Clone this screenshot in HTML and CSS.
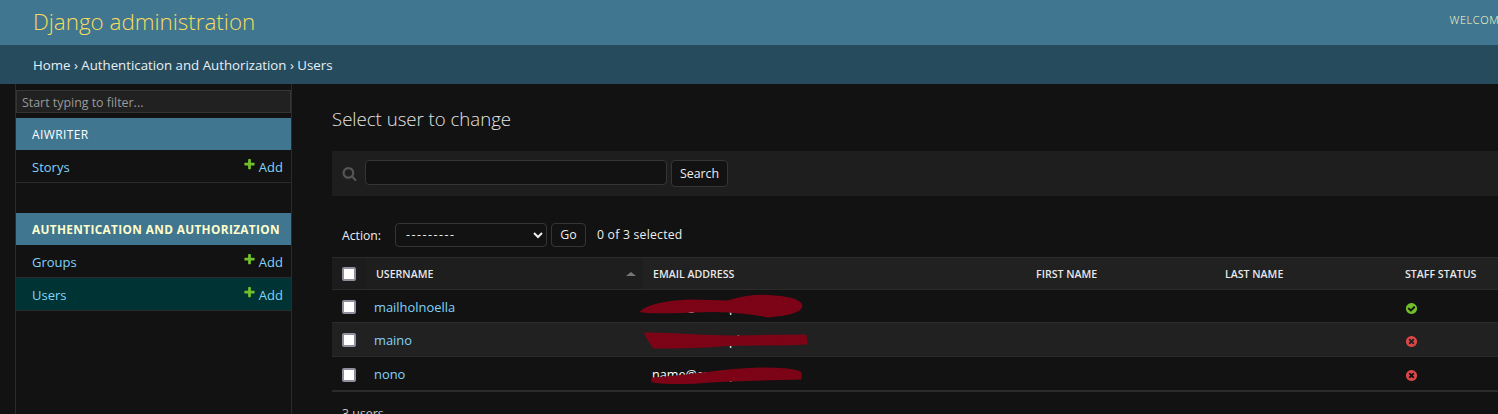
FILE: index.html
```html
<!DOCTYPE html>
<html lang="en">
<head>
<meta charset="utf-8">
<title>Select user to change | Django site admin</title>
<link rel="stylesheet" href="styles.css">
</head>
<body>
<svg class="defs" aria-hidden="true">
  <symbol id="plus" viewBox="0 0 1792 1792"><path d="M1600 736v192q0 40-28 68t-68 28h-416v416q0 40-28 68t-68 28h-192q-40 0-68-28t-28-68v-416h-416q-40 0-68-28t-28-68v-192q0-40 28-68t68-28h416v-416q0-40 28-68t68-28h192q40 0 68 28t28 68v416h416q40 0 68 28t28 68z"/></symbol>
  <symbol id="yes" viewBox="0 0 1792 1792"><path d="M1412 734q0-28-18-46l-91-90q-19-19-45-19t-45 19l-408 407-226-226q-19-19-45-19t-45 19l-91 90q-18 18-18 46 0 27 18 45l362 362q19 19 45 19 27 0 46-19l543-543q18-18 18-45zm252 162q0 209-103 385.500t-279.500 279.500-385.500 103-385.500-103-279.500-279.500-103-385.500 103-385.500 279.500-279.500 385.500-103 385.500 103 279.500 279.500 103 385.500z"/></symbol>
  <symbol id="no" viewBox="0 0 1792 1792"><path d="M1277 1122q0-26-19-45l-181-181 181-181q19-19 19-45 0-27-19-46l-90-90q-19-19-46-19-26 0-45 19l-181 181-181-181q-19-19-45-19-27 0-46 19l-90 90q-19 19-19 46 0 26 19 45l181 181-181 181q-19 19-19 45 0 27 19 46l90 90q19 19 46 19 26 0 45-19l181-181 181 181q19 19 45 19 27 0 46-19l90-90q19-19 19-46zm387-226q0 209-103 385.500t-279.500 279.500-385.500 103-385.500-103-279.500-279.500-103-385.500 103-385.500 279.500-279.500 385.500-103 385.500 103 279.500 279.500 103 385.500z"/></symbol>
</svg>
<div class="page">
  <header class="header">
    <h1 class="brand">Django administration</h1>
    <div class="tools">WELCOME, ADMIN. VIEW SITE / CHANGE PASSWORD / LOG OUT</div>
  </header>
  <nav class="crumbs">Home › Authentication and Authorization › Users</nav>
  <div class="body">
    <aside class="side">
      <input class="filter" type="text" placeholder="Start typing to filter...">
      <section class="app">
        <div class="caption">AIWRITER</div>
        <div class="model"><a class="link">Storys</a><a class="add"><svg class="plus"><use href="#plus"/></svg>Add</a></div>
      </section>
      <section class="app">
        <div class="caption strong">AUTHENTICATION AND AUTHORIZATION</div>
        <div class="model"><a class="link">Groups</a><a class="add"><svg class="plus"><use href="#plus"/></svg>Add</a></div>
        <div class="model current"><a class="link">Users</a><a class="add"><svg class="plus"><use href="#plus"/></svg>Add</a></div>
      </section>
    </aside>
    <main class="main">
      <h2 class="title">Select user to change</h2>
      <div class="toolbar">
        <svg class="search-icon" viewBox="0 0 1792 1792"><path d="M1216 832q0-185-131.500-316.500t-316.500-131.500-316.500 131.500-131.500 316.500 131.500 316.500 316.500 131.500 316.500-131.500 131.500-316.500zm512 832q0 52-38 90t-90 38q-54 0-90-38l-343-342q-179 124-399 124-143 0-273.500-55.500t-225-150-150-225-55.500-273.500 55.500-273.500 150-225 225-150 273.500-55.500 273.500 55.500 225 150 150 225 55.500 273.500q0 220-124 399l343 343q37 37 37 90z"/></svg>
        <input class="search" type="text">
        <button class="btn btn-search">Search</button>
      </div>
      <div class="actions">
        <label class="action-label">Action:</label>
        <select class="action-select"><option>---------</option></select>
        <button class="btn btn-go">Go</button>
        <span class="counter">0 of 3 selected</span>
      </div>
      <table class="list">
        <colgroup><col class="c0"><col class="c1"><col class="c2"><col class="c3"><col class="c4"><col class="c5"></colgroup>
        <thead>
          <tr>
            <th class="check-h"><input class="cb" type="checkbox"></th>
            <th class="sorted">USERNAME<span class="sort-arrow"></span></th>
            <th>EMAIL ADDRESS</th>
            <th>FIRST NAME</th>
            <th>LAST NAME</th>
            <th>STAFF STATUS</th>
          </tr>
        </thead>
        <tbody>
          <tr class="r1">
            <td class="check"><input class="cb" type="checkbox"></td>
            <td><a class="link row-link">mailholnoella</a></td>
            <td class="email"><span class="email-text">name@example.com</span>
              <svg class="scribble" viewBox="0 0 170 26"><path d="M3 17 C12 10 30 8 50 7 L88 8 C100 4 118 1 135 3 C148 4 160 7 161 12 C160 17 150 20 128 22 C118 19 100 18 88 17 C60 15 30 20 3 17Z"/></svg>
            </td>
            <td></td><td></td>
            <td class="status"><svg class="st yes"><use href="#yes"/></svg></td>
          </tr>
          <tr class="r2">
            <td class="check"><input class="cb" type="checkbox"></td>
            <td><a class="link row-link">maino</a></td>
            <td class="email"><span class="email-text">name@example.com</span>
              <svg class="scribble" viewBox="0 0 170 26"><path d="M6 7 C40 7 60 10 90 10 L165 9 L166 16 C140 18 110 16 80 18 C55 20 30 20 14 20 C12 16 8 12 6 7Z"/></svg>
            </td>
            <td></td><td></td>
            <td class="status"><svg class="st no"><use href="#no"/></svg></td>
          </tr>
          <tr class="r3">
            <td class="check"><input class="cb" type="checkbox"></td>
            <td><a class="link row-link">nono</a></td>
            <td class="email"><span class="email-text">name@example.com</span>
              <svg class="scribble" viewBox="0 0 170 26"><path d="M13 18 C50 16 80 9 120 8 C140 8 155 9 160 12 L160 17 C130 18 100 18 70 20 C50 22 25 22 13 20Z"/></svg>
            </td>
            <td></td><td></td>
            <td class="status"><svg class="st no"><use href="#no"/></svg></td>
          </tr>
        </tbody>
      </table>
      <p class="paginator">3 users</p>
    </main>
  </div>
</div>
</body>
</html>
```
FILE: styles.css
```css
* { box-sizing: border-box; }
html, body { margin: 0; height: 414px; overflow: hidden; background: #121212; }
body { font-family: "Open Sans", "Noto Sans", sans-serif; font-size: 13px; color: #eee; }
.defs { display: none; }
.page { width: 1837px; }

.header { height: 45px; background: #417690; display: flex; align-items: center; justify-content: space-between; padding: 0 40px 0 33px; }
.brand { margin: -3px 0 0; font-size: 22.4px; font-weight: 300; color: #f5dd5d; letter-spacing: 0; }
.tools { font-size: 11px; font-weight: 300; letter-spacing: 0.6px; color: #ffc; margin-top: -7px; }

.crumbs { height: 39px; background: #264b5d; color: #e6f0f6; font-size: 13.25px; line-height: 41px; padding-left: 33px; }

.body { display: flex; min-height: 330px; }
.side { width: 277px; margin-left: 15px; border-left: 1px solid #2b2b2b; border-right: 1px solid #2b2b2b; padding-top: 6px; flex: none; }
.filter { display: block; width: 100%; height: 23px; background: #212121; border: 1px solid #353535; color: #eee; font: 12.4px "Open Sans", sans-serif; padding: 2px 5px 0; border-radius: 0; outline: 0; }
.filter::placeholder { color: #9a9a9a; opacity: 1; }
.app { margin-top: 5px; margin-bottom: 30px; }
.app + .app { margin-top: 0; }
.caption { height: 32px; background: #417690; color: #fff; font-size: 12px; line-height: 33px; padding-left: 16px; letter-spacing: 0.4px; }
.caption.strong { font-weight: 700; color: #ffffcc; font-size: 11.8px; letter-spacing: 0.36px; line-height: 32px; }
.model { height: 33px; display: flex; align-items: center; justify-content: space-between; padding: 0 8px 0 16px; border-bottom: 1px solid #2b2b2b; }
.model.current { background: #003333; }
.link { color: #81d4fa; font-size: 13px; }
.row-link { font-size: 12.9px; }
.model .link, .model .add { padding-top: 1px; }
.add { color: #81d4fa; font-size: 13px; display: flex; align-items: center; }
.plus { width: 13px; height: 13px; fill: #70bf2b; margin-right: 3px; margin-left: -1px; margin-top: -4px; }

.main { width: 1400px; flex: none; padding: 0 0 0 40px; }
.title { margin: 21px 0 0; height: 46px; font-size: 18.6px; font-weight: 300; color: #e4e4e4; line-height: 27px; }
.toolbar { height: 45px; background: #1e1e1e; display: flex; align-items: center; padding-left: 10px; margin-right: -4px; }
.search-icon { width: 15px; height: 15px; fill: #555; flex: none; }
.search { width: 302px; height: 25px; margin-left: 8px; margin-top: -2px; background: #121212; border: 1px solid #353535; border-radius: 4px; outline: 0; flex: none; }
.btn { background: #121212; border: 1px solid #353535; border-radius: 4px; color: #eee; font: 12.4px "Open Sans", sans-serif; padding: 0; }
.btn-search { width: 57px; height: 27px; margin-left: 4px; }
.actions { height: 61px; display: flex; align-items: center; padding-top: 16px; padding-left: 10px; }
.action-label { font-size: 12.2px; width: 53px; margin-top: 2px; }
.action-select { width: 152px; height: 24px; background: #121212; border: 1px solid #353535; border-radius: 4px; color: #eee; font: 12.4px "Open Sans", sans-serif; letter-spacing: 1.5px; padding: 0 0 0 6px; }
.btn-go { width: 35px; height: 24px; margin-left: 4px; }
.counter { font-size: 12.2px; margin-left: 11px; margin-top: -1px; letter-spacing: 0.24px; }

.list { border-collapse: collapse; table-layout: fixed; width: 1270px; }
.c0 { width: 34px; } .c1 { width: 277px; } .c2 { width: 383px; } .c3 { width: 189px; } .c4 { width: 180px; } .c5 { width: 207px; }
.list th { height: 32px; background: #212121; border-top: 1px solid #2b2b2b; border-bottom: 1px solid #2b2b2b; text-align: left; font-size: 10.6px; font-weight: 600; color: #e8e8e8; padding: 0 10px; position: relative; }
.list .check-h { background: #1c1c1c; padding: 0 0 0 10px; }
.list .sorted { background: #1e1e1e; }
.sort-arrow { position: absolute; right: 7px; top: 14px; width: 0; height: 0; border: 5px solid transparent; border-top: 0; border-bottom: 4px solid #777; }
.list td { padding: 2px 8px 0; border-bottom: 1px solid #2b2b2b; vertical-align: middle; }
.list .r2 td { padding-top: 0; }
.list .check { padding-left: 10px; padding-right: 0; }
.list .r2 .check { padding-top: 1px; }
.list .r3 .check { padding-top: 3px; }
.r1 td { height: 33px; } .r2 td { height: 34px; background: #212121; } .r3 td { height: 34px; border-bottom: 2px solid #2b2b2b; }
.cb { appearance: none; display: block; width: 14px; height: 14px; margin: 0; background: #fff; border: 2px solid #8f8f9d; border-radius: 2px; }
.email { position: relative; }
.email-text { font-size: 12.6px; color: #fff; margin-left: 1px; }
.scribble { position: absolute; left: -3px; top: 4px; width: 170px; height: 26px; fill: #7c0416; stroke: #7c0416; stroke-width: 3; }
.list .status, .list .r2 .status { padding-left: 10px; padding-top: 4px; }
.st { display: block; width: 13px; height: 13px; }
.st.yes { fill: #70bf2b; } .st.no { fill: #dd4646; }
.paginator { margin: 13px 0 0 10px; font-size: 12.4px; color: #c8c8c8; }
```
